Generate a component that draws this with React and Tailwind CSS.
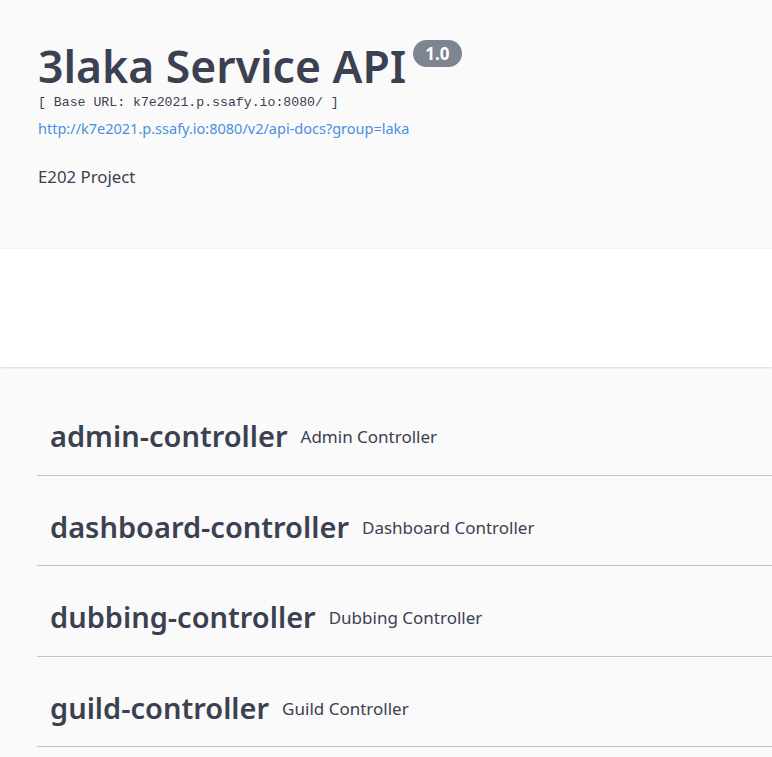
const tags = [
  { name: "admin-controller", desc: "Admin Controller" },
  { name: "dashboard-controller", desc: "Dashboard Controller" },
  { name: "dubbing-controller", desc: "Dubbing Controller" },
  { name: "guild-controller", desc: "Guild Controller" },
];

function TagRow({ name, desc }) {
  return (
    <div className="flex items-center h-[90.5px] pt-[12px] pl-[13px] border-b border-[#c4c5c9]">
      <h4 className="text-[29px] font-semibold text-[#3b4151] leading-none">{name}</h4>
      <span className="ml-[13px] text-[17px] text-[#3b4151] leading-none pt-[2px]">{desc}</span>
    </div>
  );
}

export default function App() {
  return (
    <div className="min-h-screen bg-[#fafafa] text-[#3b4151] font-['Noto_Sans',sans-serif]">
      <div className="px-[38px] pt-[40px] h-[248px]">
        <div className="flex items-start">
          <h2 className="text-[44.5px] font-semibold leading-[52px] text-[#3b4151]">3laka Service API</h2>
          <span className="ml-[7px] rounded-full bg-[#7d8492] text-white text-[17px] font-bold px-[12px] h-[27px] flex items-center leading-none">
            1.0
          </span>
        </div>
        <pre className="font-['Liberation_Mono',monospace] text-[13.2px] leading-[16px] text-[#3b4151] mt-[3px]">
          [ Base URL: k7e2021.p.ssafy.io:8080/ ]
        </pre>
        <a className="block text-[14.5px] text-[#4990e2] leading-[18px] mt-[8px]" href="#">
          http://k7e2021.p.ssafy.io:8080/v2/api-docs?group=laka
        </a>
        <p className="text-[16.8px] mt-[30px] leading-[20px]">E202 Project</p>
      </div>
      <div className="h-[119px] bg-white border-t border-[#f0f0f0] shadow-[0_1px_2px_0_rgba(0,0,0,0.15)]" />
      <div className="pl-[37px] pt-[18px]">
        {tags.map((t) => (
          <TagRow key={t.name} {...t} />
        ))}
      </div>
    </div>
  );
}
